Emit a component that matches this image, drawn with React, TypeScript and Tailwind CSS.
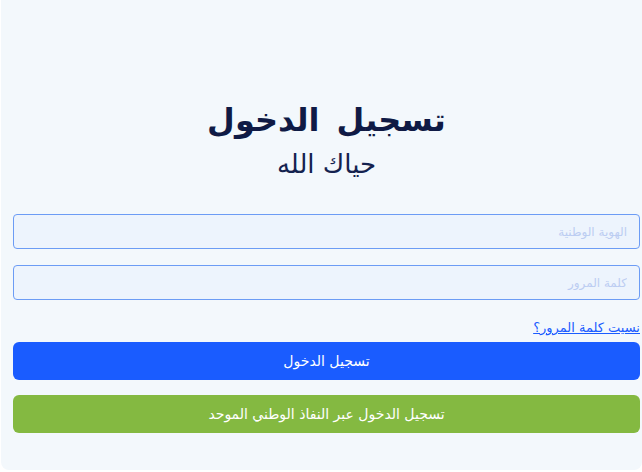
export default function App() {
  return (
    <div
      dir="rtl"
      className="min-h-screen bg-white"
      style={{ fontFamily: '"DejaVu Sans", "Noto Sans", sans-serif' }}
    >
      <div className="ml-[1px] h-[470px] rounded-b-lg bg-[#f3f8fc] pt-[97px] pl-[12px] pr-[2px]">
        <h1 className="text-center text-[32px] font-bold leading-[46px] tracking-[3px] [word-spacing:6px] text-[#0f1a45]">
          تسجيل الدخول
        </h1>
        <p className="mt-[4px] text-center text-[26px] leading-[34px] text-[#14224f]">حياك الله</p>

        <div className="mt-[33px] flex flex-col gap-[16px]">
          <input
            placeholder="الهوية الوطنية"
            className="h-[35px] w-full rounded-[4px] border border-[#6c9cf5] bg-[#edf4fd] px-[12px] text-[12px] outline-none placeholder:text-[#bccdf2]"
          />
          <input
            placeholder="كلمة المرور"
            type="text"
            className="h-[35px] w-full rounded-[4px] border border-[#6c9cf5] bg-[#edf4fd] px-[12px] text-[12px] outline-none placeholder:text-[#bccdf2]"
          />
        </div>

        <div className="mt-[19px] flex">
          <a href="#" className="text-[13px] leading-[18px] text-[#1a5cff] underline">
            نسيت كلمة المرور؟
          </a>
        </div>

        <button className="mt-[5px] h-[38px] w-full rounded-[6px] bg-[#1a5cff] text-[14px] text-white">
          تسجيل الدخول
        </button>
        <button className="mt-[15px] h-[38px] w-full rounded-[6px] bg-[#84b941] text-[14px] text-white">
          تسجيل الدخول عبر النفاذ الوطني الموحد
        </button>
      </div>
    </div>
  );
}
